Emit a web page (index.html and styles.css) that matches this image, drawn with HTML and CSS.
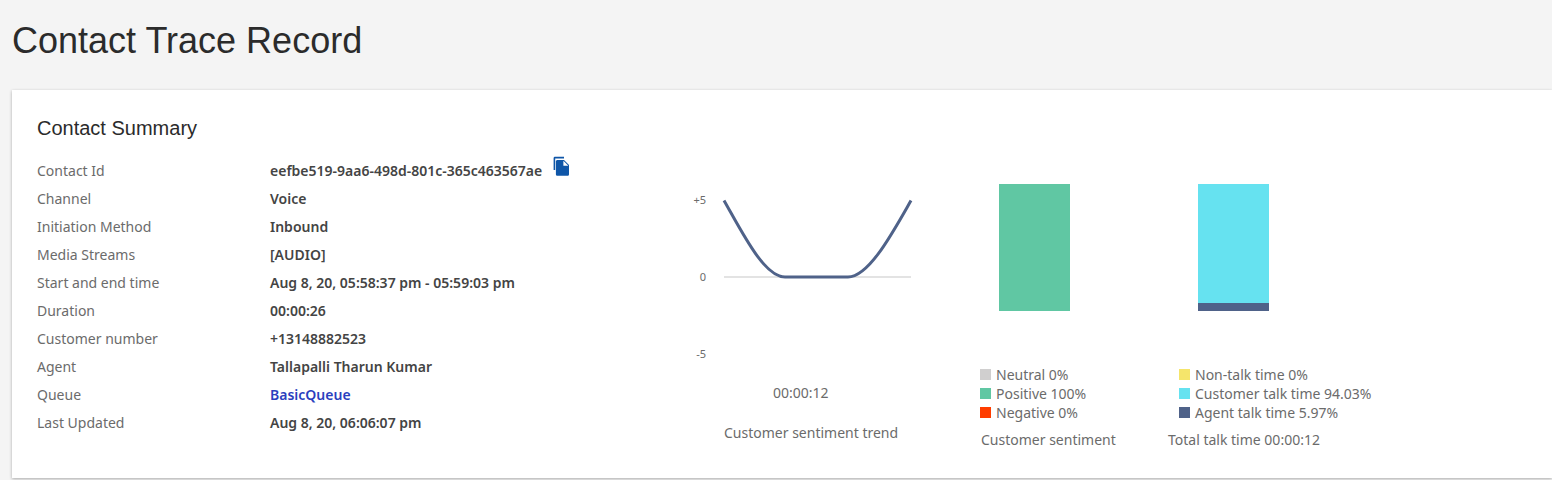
FILE: index.html
```html
<!DOCTYPE html>
<html lang="en">
<head>
<meta charset="utf-8">
<title>Contact Trace Record</title>
<link rel="stylesheet" href="styles.css">
</head>
<body>
<h1 class="page-title">Contact Trace Record</h1>
<section class="card">
  <div class="summary">
    <h2 class="card-title">Contact Summary</h2>
    <dl class="facts">
      <div class="fact"><dt>Contact Id</dt><dd>eefbe519-9aa6-498d-801c-365c463567ae<svg class="copy" viewBox="0 0 18 20" width="18" height="20"><path d="M1.6 14V2.2C1.6 1.4 2.2.8 3 .8h9v1.6H3.2V14z" fill="#0f56a8"/><path d="M5.5 4H12l5 5v9.2c0 .9-.7 1.6-1.6 1.6H5.5c-.9 0-1.6-.7-1.6-1.6V5.6C3.9 4.700 4.600 4 5.500 4z" fill="#0f56a8"/><path d="M11.400 4.800v4.900h4.900z" fill="#fff"/></svg></dd></div>
      <div class="fact"><dt>Channel</dt><dd>Voice</dd></div>
      <div class="fact"><dt>Initiation Method</dt><dd>Inbound</dd></div>
      <div class="fact"><dt>Media Streams</dt><dd>[AUDIO]</dd></div>
      <div class="fact"><dt>Start and end time</dt><dd>Aug 8, 20, 05:58:37 pm - 05:59:03 pm</dd></div>
      <div class="fact"><dt>Duration</dt><dd>00:00:26</dd></div>
      <div class="fact"><dt>Customer number</dt><dd>+13148882523</dd></div>
      <div class="fact"><dt>Agent</dt><dd>Tallapalli Tharun Kumar</dd></div>
      <div class="fact"><dt>Queue</dt><dd><a class="link" href="#">BasicQueue</a></dd></div>
      <div class="fact"><dt>Last Updated</dt><dd>Aug 8, 20, 06:06:07 pm</dd></div>
    </dl>
  </div>
  <div class="charts">
    <figure class="trend">
      <svg class="trend-plot" viewBox="0 0 240 180" width="240" height="180">
        <line x1="44" y1="97" x2="231" y2="97" stroke="#e3e3e3" stroke-width="2"/>
        <path d="M44 20.500C62 52 84 97 105 97H168C189 97 213 52 231 20.500" fill="none" stroke="#4f6289" stroke-width="3"/>
        <text class="tick" x="26" y="24" text-anchor="end">+5</text>
        <text class="tick" x="26" y="101" text-anchor="end">0</text>
        <text class="tick" x="26" y="178" text-anchor="end">-5</text>
      </svg>
      <div class="time">00:00:12</div>
      <figcaption class="trend-caption">Customer sentiment trend</figcaption>
    </figure>
    <figure class="stack sentiment">
      <div class="bar"><span class="seg positive-fill grow"></span></div>
      <ul class="legend">
        <li><i class="swatch neutral-fill"></i>Neutral 0%</li>
        <li><i class="swatch positive-fill"></i>Positive 100%</li>
        <li><i class="swatch negative-fill"></i>Negative 0%</li>
      </ul>
      <figcaption class="caption">Customer sentiment</figcaption>
    </figure>
    <figure class="stack talk">
      <div class="bar"><span class="seg customer-fill grow"></span><span class="seg agent-fill agent-seg"></span></div>
      <ul class="legend">
        <li><i class="swatch nontalk-fill"></i>Non-talk time 0%</li>
        <li><i class="swatch customer-fill"></i>Customer talk time 94.03%</li>
        <li><i class="swatch agent-fill"></i>Agent talk time 5.97%</li>
      </ul>
      <figcaption class="caption caption-talk">Total talk time 00:00:12</figcaption>
    </figure>
  </div>
</section>
</body>
</html>
```
FILE: styles.css
```css
* { box-sizing: border-box; }
html, body { margin: 0; height: 480px; overflow: hidden; }
body { background: #f4f4f4; font-family: "Noto Sans", sans-serif; font-size: 14px; color: #6b6b6b; }
.page-title { margin: 0; padding: 20px 0 0 12px; height: 90px; font: 400 36px/42px "Liberation Sans", sans-serif; color: #2b2b2b; }
.card { margin-left: 12px; height: 388px; background: #fff; box-shadow: 0 1px 3px rgba(0,0,0,.3); display: flex; padding: 0 0 0 25px; }
.summary { width: 643px; flex: none; }
.card-title { margin: 0; padding-top: 27px; height: 66px; font: 400 20px/23px "Liberation Sans", sans-serif; color: #2b2b2b; }
.facts { margin: 0; }
.fact { display: flex; height: 28px; align-items: center; }
.fact dt { width: 233px; flex: none; }
.fact dd { margin: 0; font-weight: 600; color: #444; display: flex; align-items: center; }
.copy { margin: -8px 0 0 10px; }
.link { color: #2b3fbe; text-decoration: none; }
.charts { display: flex; flex: 1; min-width: 0; }
figure { margin: 0; }
.trend { width: 300px; flex: none; padding-top: 90px; }
.trend-plot { display: block; margin-bottom: 0; }
.tick { font-size: 11px; fill: #6b6b6b; }
.time { padding-left: 93px; margin-top: 23px; line-height: 20px; }
.trend-caption { padding-left: 44px; margin-top: 20px; line-height: 20px; }
.stack { flex: none; padding-top: 94px; }
.sentiment { width: 199px; }
.talk { width: 300px; }
.bar { width: 71px; height: 127px; margin-left: 19px; display: flex; flex-direction: column; }
.seg { display: block; }
.grow { flex: 1; }
.agent-seg { height: 7.6px; }
.legend { list-style: none; margin: 54px 0 0; padding: 0; line-height: 19px; }
.legend li { display: flex; align-items: center; }
.swatch { width: 11px; height: 11px; margin-right: 5px; }
.caption { margin-top: 8px; line-height: 20px; padding-left: 1px; }
.caption-talk { margin-left: -12px; }
.neutral-fill { background: #d0cfcf; }
.positive-fill { background: #60c7a3; }
.negative-fill { background: #ff3d00; }
.nontalk-fill { background: #f5e56b; }
.customer-fill { background: #66e2f0; }
.agent-fill { background: #4f6289; }
```
